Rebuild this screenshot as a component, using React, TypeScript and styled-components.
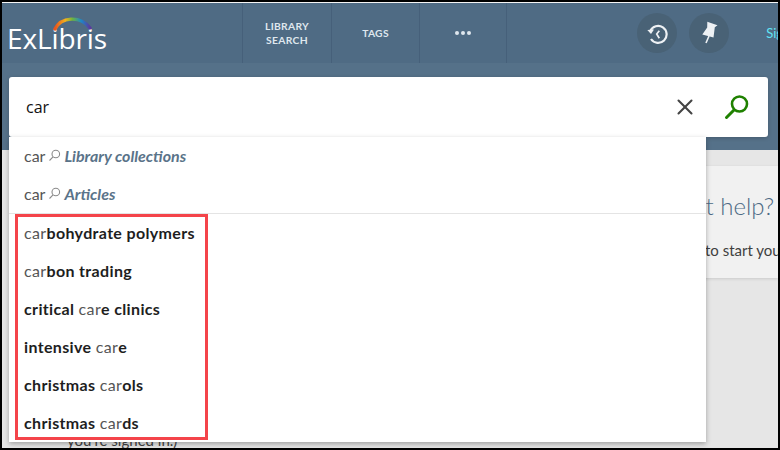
import React from 'react';
import styled, { createGlobalStyle } from 'styled-components';
import { X } from 'lucide-react';

const GlobalStyle = createGlobalStyle`
  html, body {
    margin: 0;
    padding: 0;
    width: 780px;
    height: 450px;
    overflow: hidden;
    background: #000;
    font-family: Lato, "Open Sans", sans-serif;
  }
`;

const Frame = styled.div`
  width: 776px;
  height: 446px;
  margin: 2px 0 0 2px;
  background: #e6e6e6;
  position: relative;
  overflow: hidden;
`;

const TopBar = styled.header`
  height: 61px;
  box-sizing: border-box;
  border-top: 1px solid #f4f4f4;
  background: #4f6b84;
  display: flex;
  align-items: stretch;
`;

const Logo = styled.div`
  width: 240px;
  position: relative;
  color: #fff;
  font-family: "Open Sans", sans-serif;
  font-size: 28px;
  line-height: 1;
  padding: 21px 0 0 5px;
  letter-spacing: -0.1px;
  box-sizing: border-box;
`;

const LogoArc = styled.svg`
  position: absolute;
  left: 51px;
  top: 11px;
`;

const NavItem = styled.div<{ $w: number }>`
  width: ${(p) => p.$w}px;
  border-left: 1px solid #46607a;
  box-sizing: border-box;
  display: flex;
  align-items: center;
  justify-content: center;
  text-align: center;
  color: #dfe7ee;
  font-size: 10.3px;
  font-weight: 700;
  line-height: 14px;
  letter-spacing: 0.3px;
`;

const Dots = styled(NavItem)`
  gap: 2px;
  border-right: 1px solid #46607a;
  & > i {
    width: 4px;
    height: 4px;
    border-radius: 50%;
    background: #dfe7ee;
  }
`;

const Spacer = styled.div`
  flex: 1;
`;

const RoundBtn = styled.div`
  width: 40px;
  height: 40px;
  border-radius: 50%;
  background: #496276;
  align-self: center;
  margin-right: 12px;
  display: flex;
  align-items: center;
  justify-content: center;
`;

const SignIn = styled.div`
  margin-left: 25px;
  margin-right: -26px;
  color: #5fe3f5;
  font-size: 13px;
  font-weight: 400;
  align-self: center;
  white-space: nowrap;
`;

const SearchBand = styled.div`
  height: 87px;
  background: #557189;
  padding: 14px 10px 0 7px;
  box-sizing: border-box;
`;

const SearchBox = styled.div`
  height: 60px;
  box-sizing: border-box;
  background: #fff;
  border-radius: 3px;
  display: flex;
  align-items: center;
  padding: 0 18px 0 17px;
  box-shadow: 0 1px 4px rgba(0, 0, 0, 0.2);
  color: #111;
  font-family: "Open Sans", sans-serif;
  font-size: 16px;
`;

const Query = styled.span`
  flex: 1;
`;

const ClearBtn = styled.span`
  display: flex;
  margin-right: 26px;
  color: #444;
`;

const HelpCard = styled.div`
  position: absolute;
  left: 535px;
  top: 164px;
  width: 241px;
  height: 112px;
  background: #f1f1f1;
  box-shadow: 0 1px 3px rgba(0, 0, 0, 0.12);
  color: #3f3f3f;
  overflow: hidden;
  white-space: nowrap;
`;

const HelpTitle = styled.div`
  font-size: 24px;
  font-weight: 300;
  color: #4d6a85;
  padding: 25px 0 0 156px;
  line-height: 30px;
`;

const HelpText = styled.div`
  font-size: 15px;
  padding: 20px 0 0 168px;
`;

const Peek = styled.div`
  position: absolute;
  left: 65px;
  top: 430px;
  font-size: 15px;
  color: #444;
  line-height: 16px;
`;

const Dropdown = styled.div`
  position: absolute;
  left: 7px;
  top: 135px;
  width: 697px;
  height: 305px;
  background: #fff;
  box-shadow: 0 2px 5px rgba(0, 0, 0, 0.3);
`;

const ScopeRow = styled.div`
  height: 38px;
  box-sizing: border-box;
  padding: 0 0 2px 15px;
  display: flex;
  align-items: center;
  font-size: 16px;
  color: #555;
  gap: 3px;
`;

const ScopeName = styled.em`
  font-weight: 700;
  color: #5a7389;
`;

const Divider = styled.div`
  height: 1px;
  background: #e4e4e4;
`;

const Suggestion = styled.div`
  height: 38px;
  box-sizing: border-box;
  padding: 0 0 2px 15px;
  display: flex;
  align-items: center;
  font-size: 16px;
  letter-spacing: 0.35px;
  font-weight: 700;
  color: #1e1e1e;
  white-space: pre;
`;

const Match = styled.span`
  font-weight: 400;
  color: #555;
`;

const Highlight = styled.div`
  position: absolute;
  left: 6px;
  top: 77px;
  width: 187px;
  height: 220px;
  border: 3px solid #f4444a;
`;

const ScopeIcon = () => (
  <svg width="13" height="13" viewBox="0 0 13 13" fill="none" stroke="#8a8a8a" strokeWidth="1.1">
    <circle cx="7.8" cy="5" r="3.8" />
    <path d="M5 7.8 1.5 11.5" />
  </svg>
);

const suggestions: [string, string, string][] = [
  ['', 'car', 'bohydrate polymers'],
  ['', 'car', 'bon trading'],
  ['critical ', 'car', 'e clinics'],
  ['intensive ', 'car', 'e'],
  ['christmas ', 'car', 'ols'],
  ['christmas ', 'car', 'ds'],
];

export default function App() {
  return (
    <>
      <GlobalStyle />
      <Frame>
        <TopBar>
          <Logo>
            ExLibris
            <LogoArc width="40" height="18" viewBox="0 0 40 18" fill="none">
              <defs>
                <linearGradient id="arc" x1="0" x2="1" y1="0" y2="0">
                  <stop offset="0" stopColor="#e8541e" />
                  <stop offset="0.3" stopColor="#f2b21c" />
                  <stop offset="0.5" stopColor="#6bb340" />
                  <stop offset="0.75" stopColor="#1f86c8" />
                  <stop offset="1" stopColor="#5b3a9e" />
                </linearGradient>
              </defs>
              <path d="M2 15C8 3 27 1 37 14" stroke="url(#arc)" strokeWidth="3.4" strokeLinecap="round" />
            </LogoArc>
          </Logo>
          <NavItem $w={89}>LIBRARY<br />SEARCH</NavItem>
          <NavItem $w={88}>TAGS</NavItem>
          <Dots $w={88}><i /><i /><i /></Dots>
          <Spacer />
          <RoundBtn>
            <svg width="22" height="22" viewBox="0 0 22 22" fill="none" stroke="#eef1f4" strokeWidth="2.2">
              <path d="M4.3 9A8.5 8.5 0 1 1 5 17" />
              <path d="M1.3 8 8 7.5 5 12z" fill="#eef1f4" stroke="none" />
              <path d="M13.3 8.7 10.7 12l2.6 4.3" strokeWidth="1.7" />
            </svg>
          </RoundBtn>
          <RoundBtn>
            <svg width="22" height="26" viewBox="0 0 22 26" fill="#eef1f4">
              <path d="M9.3 1.7 19.5 5.2 16.8 7.2 15.5 17.6 4.3 14.5 9.2 7.5z" />
              <path d="M11 16 8 23" stroke="#eef1f4" strokeWidth="1.6" />
            </svg>
          </RoundBtn>
          <SignIn>Sign in</SignIn>
        </TopBar>
        <SearchBand>
          <SearchBox>
            <Query>car</Query>
            <ClearBtn><X size={26} strokeWidth={1.9} /></ClearBtn>
            <svg width="26" height="26" viewBox="0 0 26 26" fill="none" stroke="#1f8100">
              <circle cx="15.5" cy="10" r="7.5" strokeWidth="2.6" />
              <path d="M10 16 2.5 23.5" strokeWidth="3" strokeLinecap="round" />
            </svg>
          </SearchBox>
        </SearchBand>
        <HelpCard>
          <HelpTitle>et help?</HelpTitle>
          <HelpText>to start you</HelpText>
        </HelpCard>
        <Peek>you're signed in.)</Peek>
        <Dropdown>
          <ScopeRow>car <ScopeIcon /> <ScopeName>Library collections</ScopeName></ScopeRow>
          <ScopeRow>car <ScopeIcon /> <ScopeName>Articles</ScopeName></ScopeRow>
          <Divider />
          {suggestions.map(([before, match, after]) => (
            <Suggestion key={before + after}>
              {before}
              <Match>{match}</Match>
              {after}
            </Suggestion>
          ))}
          <Highlight />
        </Dropdown>
      </Frame>
    </>
  );
}
